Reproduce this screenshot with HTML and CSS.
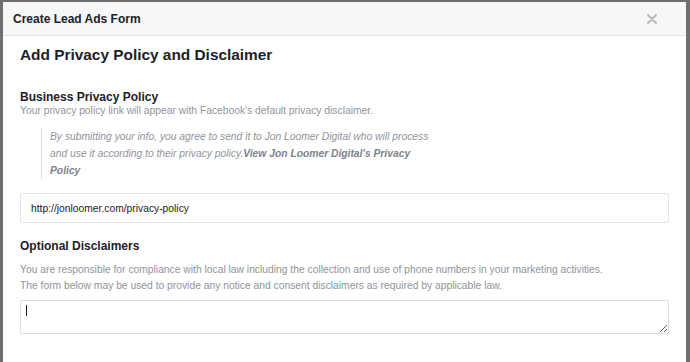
FILE: index.html
```html
<!DOCTYPE html>
<html lang="en">
<head>
    <meta charset="UTF-8">
    <title>Create Lead Ads Form</title>
    <link rel="stylesheet" href="styles.css">
</head>
<body>
    <div class="screen">
        <div class="dialog">
            <div class="dialog-header">
                <span class="dialog-title">Create Lead Ads Form</span>
                <svg class="dialog-close" width="10" height="10" viewBox="0 0 10 10">
                    <path d="M1 1 L9 9 M9 1 L1 9" stroke="#b4b7bd" stroke-width="1.8" stroke-linecap="round"/>
                </svg>
            </div>
            <div class="dialog-body">
                <h2 class="page-title">Add Privacy Policy and Disclaimer</h2>

                <div class="section">
                    <h3 class="section-title">Business Privacy Policy</h3>
                    <p class="section-desc">Your privacy policy link will appear with Facebook's default privacy disclaimer.</p>
                    <blockquote class="preview">
                        By submitting your info, you agree to send it to Jon Loomer Digital who will process
                        and use it according to their privacy policy.<b>View Jon Loomer Digital's Privacy Policy</b>
                    </blockquote>
                    <input class="field" type="text" value="http://jonloomer.com/privacy-policy">
                </div>

                <div class="section section-optional">
                    <h3 class="section-title">Optional Disclaimers</h3>
                    <p class="section-desc">You are responsible for compliance with local law including the collection and use of phone numbers in your marketing activities.<br>The form below may be used to provide any notice and consent disclaimers as required by applicable law.</p>
                    <div class="area-wrap">
                        <textarea class="field area"></textarea>
                        <span class="caret"></span>
                    </div>
                </div>
            </div>
        </div>
    </div>
</body>
</html>
```

FILE: styles.css
```css
* {
    padding: 0;
    margin: 0;
    box-sizing: border-box;
}

body {
    width: 690px;
    height: 362px;
    overflow: hidden;
    background: #6f6f6f;
    font-family: "Liberation Sans", Arial, sans-serif;
}

.screen {
    height: 100%;
    padding: 2px 4px 0 3px;
}

.dialog {
    height: 100%;
    background: #fff;
}

.dialog-header {
    height: 34px;
    display: flex;
    align-items: center;
    justify-content: space-between;
    padding: 0 29px 0 10px;
    background: #f6f7f9;
    border-bottom: 1px solid #e5e5e5;
}

.dialog-title {
    font-size: 12px;
    font-weight: bold;
    color: #1d2129;
}

.dialog-close {
    display: block;
}

.dialog-body {
    padding: 9px 17px 0 17px;
}

.page-title {
    font-size: 15.4px;
    line-height: 20px;
    font-weight: bold;
    color: #1d2129;
    margin-bottom: 25px;
}

.section-title {
    font-size: 12px;
    line-height: 14px;
    font-weight: bold;
    color: #1d2129;
}

.section-desc {
    font-size: 10.3px;
    line-height: 14px;
    color: #90949c;
}

.preview {
    width: 396px;
    margin: 10px 0 14px 21px;
    padding: 0 0 0 8px;
    border-left: 1px solid #d8dbe0;
    font-size: 10.3px;
    line-height: 17px;
    font-style: italic;
    color: #90949c;
}

.preview b {
    color: #7d828c;
}

.field {
    display: block;
    width: 649px;
    height: 30px;
    padding: 0 10px;
    border: 1px solid #e2e4e8;
    border-radius: 2px;
    font-family: inherit;
    font-size: 10.3px;
    color: #1d2129;
    outline: none;
}

.section-optional {
    margin-top: 16px;
}

.section-optional .section-desc {
    margin-top: 9px;
    line-height: 16px;
}

.area-wrap {
    position: relative;
    margin-top: 6px;
}

.area {
    height: 34px;
    padding: 8px 6px;
    border-color: #dcdee3;
    resize: vertical;
}

.caret {
    position: absolute;
    left: 6px;
    top: 5px;
    width: 1px;
    height: 11px;
    background: #1d2129;
}
```
